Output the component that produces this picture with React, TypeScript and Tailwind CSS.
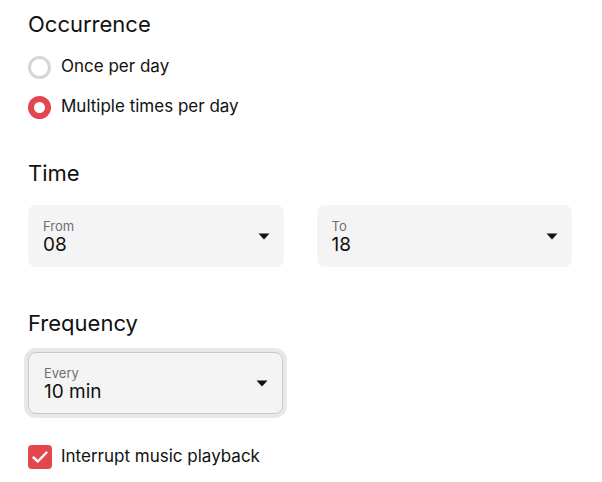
import React from "react";

const RED = "#e3474d";

function Caret() {
  return (
    <svg width="12" height="7" viewBox="0 0 12 7" className="shrink-0">
      <path d="M0.5 0.5 L11.5 0.5 L6 6.5 Z" fill="#111" />
    </svg>
  );
}

function Select({ label, value, focused }: { label: string; value: string; focused?: boolean }) {
  return (
    <div
      className={
        "flex items-center justify-between rounded-[8px] bg-[#f4f4f4] pl-[15px] pr-[14px] h-[62px] " +
        (focused ? "border border-[#c9c9c9] shadow-[0_0_0_4px_#e8e8e8] pl-[14px] pr-[13px]" : "")
      }
    >
      <div className="flex flex-col pt-[1px]">
        <span className="text-[13px] leading-[16px] text-[#6f6f6f]">{label}</span>
        <span className="text-[19px] leading-[22px] text-[#111]">{value}</span>
      </div>
      <Caret />
    </div>
  );
}

export default function App() {
  return (
    <div
      className="w-[602px] h-[482px] bg-white px-[28px] pt-[10px] text-[#111]"
      style={{ fontFamily: "Inter, 'Noto Sans', sans-serif" }}
    >
      <h2 className="text-[22px] leading-[28px] font-normal">Occurrence</h2>
      <div className="mt-[9px] flex flex-col">
        <div className="flex items-center h-[40px] gap-[10px]">
          <span className="w-[23px] h-[23px] rounded-full border-[3px] border-[#d6d6d6] bg-white" />
          <span className="text-[17px]">Once per day</span>
        </div>
        <div className="flex items-center h-[40px] gap-[10px]">
          <span className="w-[23px] h-[23px] rounded-full border-[6px] bg-white" style={{ borderColor: RED }} />
          <span className="text-[17px]">Multiple times per day</span>
        </div>
      </div>

      <h2 className="mt-[32px] text-[22px] leading-[28px] font-normal">Time</h2>
      <div className="mt-[18px] grid grid-cols-2 gap-[33px] pr-[2px]">
        <Select label="From" value="08" />
        <Select label="To" value="18" />
      </div>

      <h2 className="mt-[42px] text-[22px] leading-[28px] font-normal">Frequency</h2>
      <div className="mt-[15px] w-[255px]">
        <Select label="Every" value="10 min" focused />
      </div>

      <div className="mt-[23px] flex items-center h-[40px] gap-[9px]">
        <span className="w-[24px] h-[24px] rounded-[4px] flex items-center justify-center" style={{ backgroundColor: RED }}>
          <svg width="24" height="24" viewBox="0 0 24 24">
            <path d="M5.5 12.5 L9.8 16.5 L18.5 7.5" stroke="#fff" strokeWidth="2.4" fill="none" strokeLinecap="round" strokeLinejoin="round" />
          </svg>
        </span>
        <span className="text-[17px]">Interrupt music playback</span>
      </div>
    </div>
  );
}
